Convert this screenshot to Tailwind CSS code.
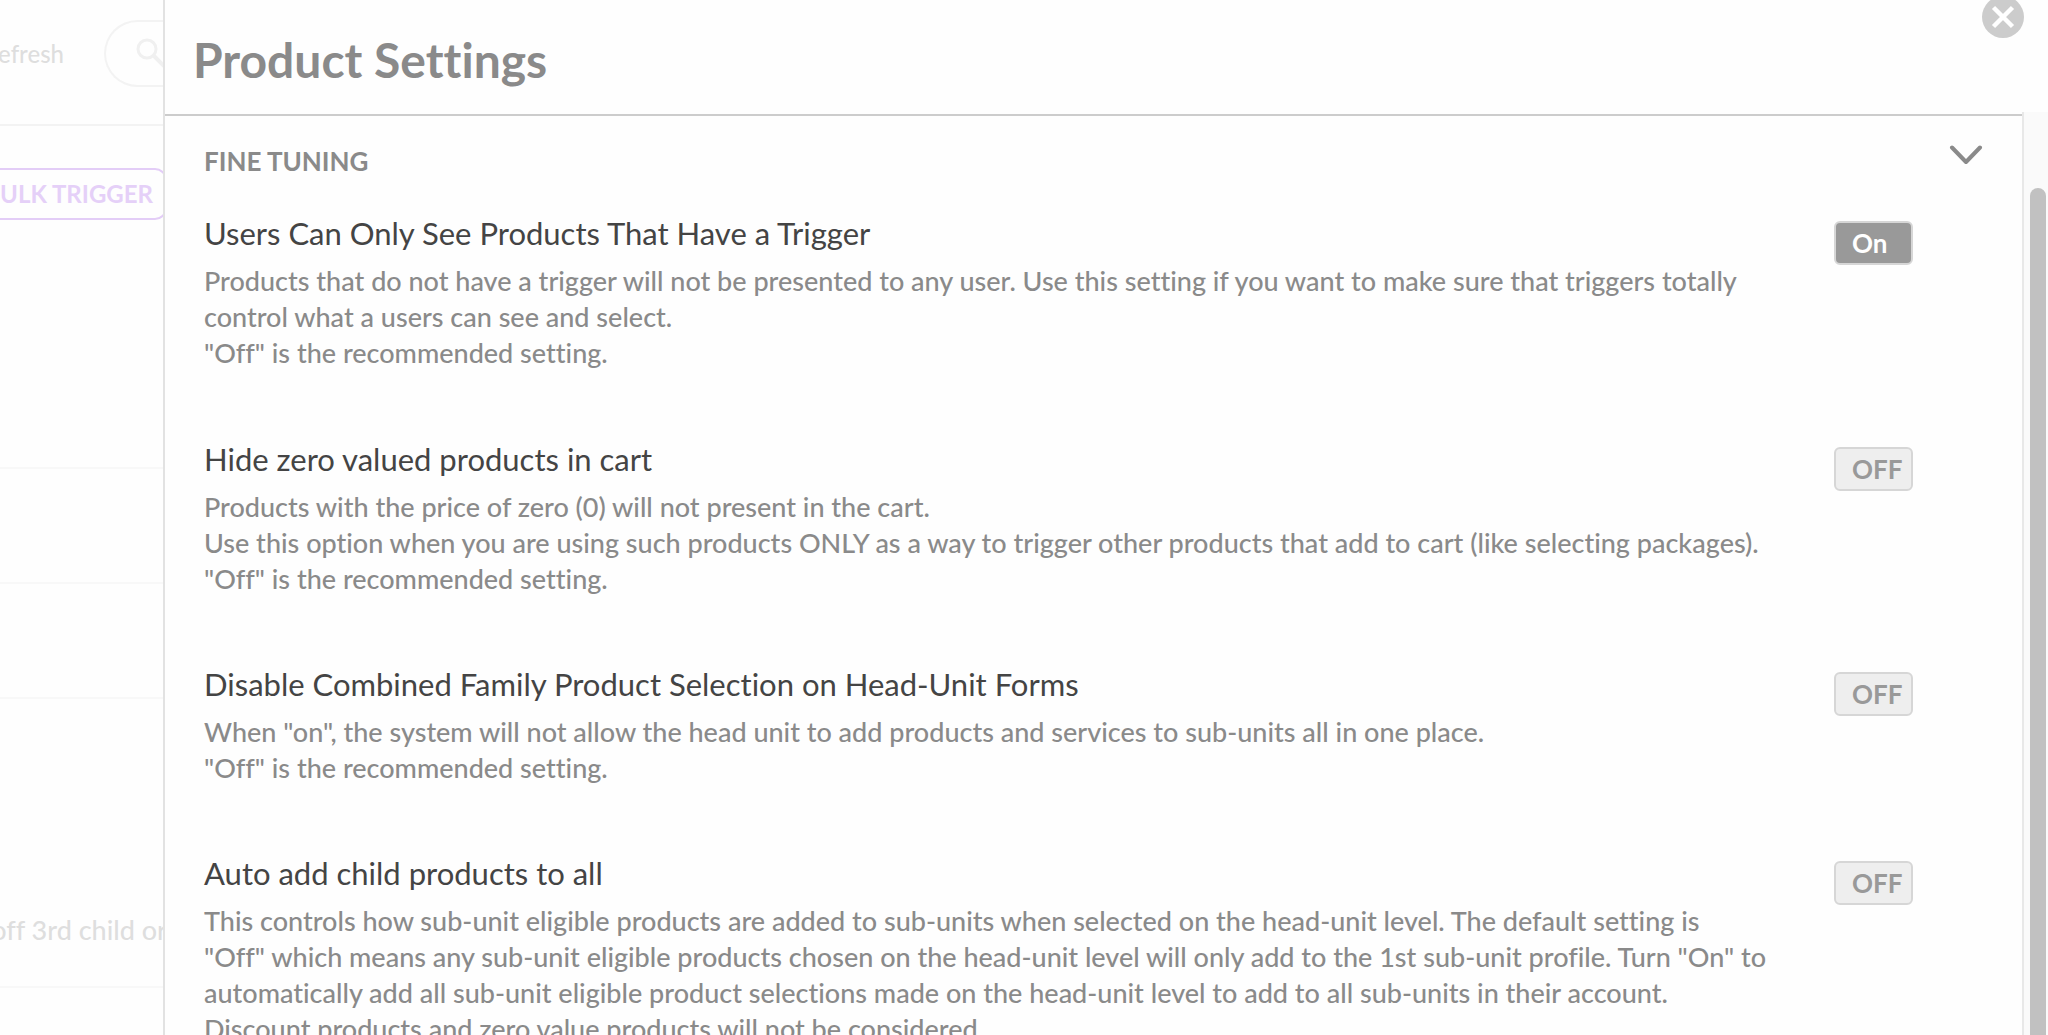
<!DOCTYPE html>
<html lang="en">
<head>
    <meta charset="UTF-8">
    <meta name="viewport" content="width=device-width, initial-scale=1.0">
    <title>Product Settings</title>
    <script src="https://cdn.jsdelivr.net/npm/@tailwindcss/browser@4"></script>
</head>
<body class="flex h-screen overflow-hidden bg-[#fefefe] font-[Lato,sans-serif] text-[#8a8a8a] [font-variant-ligatures:no-common-ligatures]">
    <!-- Faded page behind the panel -->
    <div class="w-[163px] shrink-0 overflow-hidden whitespace-nowrap text-[#dedede]">
        <div class="flex h-[126px] items-start justify-end border-b-2 border-[#f3f3f3] pt-5">
            <a href="#" class="mr-10 py-4 text-2xl leading-9 font-medium">Refresh</a>
            <button class="-mr-px h-[67px] w-[60px] shrink-0 rounded-l-full border-2 border-r-0 border-[#f3f3f3] pl-7" aria-label="Search">
                <svg class="h-9 w-9" viewBox="0 0 36 36" fill="none" stroke="#f0f0f0" stroke-width="3">
                    <circle cx="13" cy="13" r="9"/>
                    <path d="M19.500 19.500L34 34" stroke-width="4"/>
                </svg>
            </button>
        </div>
        <div class="flex h-[343px] items-start justify-end border-b-2 border-[#f8f8f8] pt-[42px]">
            <button class="-mr-1 h-[52px] shrink-0 rounded-xl border-2 border-[#e3cdf7] px-3 text-2xl font-bold text-[#e5d0f8]">BULK TRIGGER</button>
        </div>
        <div class="h-[115px] border-b-2 border-[#f8f8f8]"></div>
        <div class="h-[115px] border-b-2 border-[#f8f8f8]"></div>
        <div class="flex h-[289px] items-end justify-end border-b-2 border-[#f8f8f8] pb-9">
            <p class="-mr-1 text-[27px] leading-10 font-medium">off 3rd child or</p>
        </div>
    </div>

    <!-- Settings panel -->
    <div class="relative flex min-w-0 flex-1 flex-col border-l-2 border-[#e2e2e2] bg-[#fefefe]">
        <header class="flex h-[112px] shrink-0 items-center pl-7 pt-2">
            <h1 class="text-5xl font-bold">Product Settings</h1>
        </header>
        <button class="absolute -top-1 right-6 h-[42px] w-[42px] rounded-full bg-[#cccccc]" aria-label="Close">
            <svg class="h-[42px] w-[42px]" viewBox="0 0 42 42" fill="none" stroke="#fff" stroke-width="4.500">
                <path d="M11.500 11.500L30.500 30.500M30.500 11.500L11.500 30.500"/>
            </svg>
        </button>

        <div class="flex min-h-0 flex-1">
            <main class="mt-0.5 min-w-0 flex-1 overflow-hidden border-t-2 border-[#cccccc] pl-[39px]">
                <div class="flex items-start justify-between pr-[38px] pt-[29px]">
                    <h2 class="text-[26px] font-bold leading-8">FINE TUNING</h2>
                    <button aria-label="Collapse">
                        <svg class="h-5 w-9" viewBox="0 0 36 20" fill="none" stroke="#8a8a8a" stroke-width="4" stroke-linecap="round" stroke-linejoin="round">
                            <path d="M4 2.500L18 17L32 2.500"/>
                        </svg>
                    </button>
                </div>

                <div class="flex items-start gap-12 pr-[109px] pt-9">
                    <div class="min-w-0 flex-1 pb-8">
                        <h3 id="only-trigger" class="mb-2.5 text-[31px] leading-10 text-[#444444]">Users Can Only See Products That Have a Trigger</h3>
                        <p class="text-[27px] leading-9 font-medium">Products that do not have a trigger will not be presented to any user. Use this setting if you want to make sure that triggers totally control what a users can see and select.<br>"Off" is the recommended setting.</p>
                    </div>
                    <button role="switch" aria-checked="true" aria-labelledby="only-trigger" class="mt-2 h-11 w-[79px] rounded-md border-2 border-[#d6d6d6] bg-[#999999] pl-4 text-left text-[26px] font-bold leading-9 text-white">On</button>
                </div>

                <div class="flex items-start gap-12 pr-[109px] pt-9">
                    <div class="min-w-0 flex-1 pb-[31px]">
                        <h3 id="hide-zero" class="mb-2.5 text-[31px] leading-10 text-[#444444]">Hide zero valued products in cart</h3>
                        <p class="text-[27px] leading-9 font-medium">Products with the price of zero (0) will not present in the cart.<br>Use this option when you are using such products ONLY as a way to trigger other products that add to cart (like selecting packages).<br>"Off" is the recommended setting.</p>
                    </div>
                    <button role="switch" aria-checked="false" aria-labelledby="hide-zero" class="mt-2 h-11 w-[79px] rounded-md border-2 border-[#d6d6d6] bg-[#eeeeee] pl-4 text-left text-[26px] font-bold leading-9 text-[#999999]">OFF</button>
                </div>

                <div class="flex items-start gap-12 pr-[109px] pt-9">
                    <div class="min-w-0 flex-1 pb-[31px]">
                        <h3 id="disable-combined" class="mb-2.5 text-[31px] leading-10 text-[#444444]">Disable Combined Family Product Selection on Head-Unit Forms</h3>
                        <p class="text-[27px] leading-9 font-medium">When "on", the system will not allow the head unit to add products and services to sub-units all in one place.<br>"Off" is the recommended setting.</p>
                    </div>
                    <button role="switch" aria-checked="false" aria-labelledby="disable-combined" class="mt-2 h-11 w-[79px] rounded-md border-2 border-[#d6d6d6] bg-[#eeeeee] pl-4 text-left text-[26px] font-bold leading-9 text-[#999999]">OFF</button>
                </div>

                <div class="flex items-start gap-12 pr-[109px] pt-9">
                    <div class="min-w-0 flex-1 pb-[31px]">
                        <h3 id="auto-add" class="mb-2.5 text-[31px] leading-10 text-[#444444]">Auto add child products to all</h3>
                        <p class="text-[27px] leading-9 font-medium">This controls how sub-unit eligible products are added to sub-units when selected on the head-unit level. The default setting is<br>"Off" which means any sub-unit eligible products chosen on the head-unit level will only add to the 1st sub-unit profile. Turn "On" to automatically add all sub-unit eligible product selections made on the head-unit level to add to all sub-units in their account.<br>Discount products and zero value products will not be considered.</p>
                    </div>
                    <button role="switch" aria-checked="false" aria-labelledby="auto-add" class="mt-2 h-11 w-[79px] rounded-md border-2 border-[#d6d6d6] bg-[#eeeeee] pl-4 text-left text-[26px] font-bold leading-9 text-[#999999]">OFF</button>
                </div>
            </main>

            <!-- Scrollbar -->
            <div class="w-[26px] shrink-0 border-l-2 border-[#e8e8e8] bg-[#fafafa] pl-1.5 pr-0.5 pt-[76px]">
                <div class="h-full rounded-t-full bg-[#c1c1c1]"></div>
            </div>
        </div>
    </div>
</body>
</html>
